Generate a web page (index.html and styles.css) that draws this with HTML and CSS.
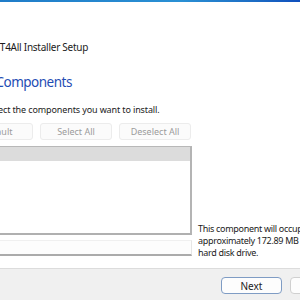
FILE: index.html
```html
<!DOCTYPE html>
<html>
<head>
<meta charset="utf-8">
<link rel="stylesheet" href="styles.css">
</head>
<body>
<div class="topbar"></div>
<div class="window">
  <header class="head">
    <div class="title">GPT4All Installer Setup</div>
    <h1 class="heading">Select Components</h1>
    <p class="sub">Select the components you want to install.</p>
  </header>
  <div class="main">
    <div class="left">
      <div class="btns">
        <button class="tbtn">Default</button>
        <button class="tbtn">Select All</button>
        <button class="tbtn">Deselect All</button>
      </div>
      <div class="list"><div class="list-head"></div></div>
      <div class="desc"></div>
    </div>
    <div class="size">This component will occupy<br>approximately 172.89 MB of<br>hard disk drive.</div>
  </div>
  <footer class="footer">
    <button class="btn primary">Next</button>
    <button class="btn">Cancel</button>
  </footer>
</div>
</body>
</html>
```
FILE: styles.css
```css
html, body {
  margin: 0;
  padding: 0;
  width: 300px;
  height: 300px;
  overflow: hidden;
  background: #ffffff;
  font-family: "Noto Sans", "Open Sans", sans-serif;
  color: #1b1b1b;
}
.topbar {
  height: 2px;
  background: linear-gradient(to right, #1f7cc8 0%, #2a90d4 60%, #1c6cc4 85%, #0f4fbd 100%);
}
.window {
  display: flex;
  flex-direction: column;
  height: 298px;
}
.head {
  padding-top: 38px;
}
.title {
  font-size: 10px;
  line-height: 14px;
  margin-left: -13px;
  white-space: nowrap;
  letter-spacing: -0.25px;
}
.heading {
  margin: 19px 0 0 -42px;
  font-size: 13.5px;
  line-height: 18px;
  font-weight: normal;
  color: #1f4db4;
  white-space: nowrap;
  letter-spacing: -0.5px;
}
.sub {
  margin: 12px 0 0 -14px;
  font-size: 9px;
  line-height: 13px;
  white-space: nowrap;
  letter-spacing: -0.12px;
}
.main {
  display: flex;
  align-items: flex-end;
  gap: 6px;
  margin-top: 7px;
  margin-left: -39px;
}
.left {
  width: 231px;
  flex: none;
  display: flex;
  flex-direction: column;
}
.btns {
  display: flex;
  gap: 7px;
}
.tbtn {
  width: 72px;
  height: 17px;
  padding: 0;
  font-family: inherit;
  font-size: 9px;
  color: #9c9c9c;
  background: #fbfbfb;
  border: 1px solid #ececec;
  border-radius: 3px;
}
.list {
  margin-top: 6px;
  height: 89px;
  box-sizing: border-box;
  border-top: 1px solid #b8b8b8;
  border-right: 2px solid #b4b4b4;
  border-bottom: 2px solid #b0b0b0;
  background: #ffffff;
}
.list-head {
  height: 14px;
  background: #dcdcdc;
}
.desc {
  margin-top: 5px;
  height: 16px;
  box-sizing: border-box;
  border-top: 1px solid #f0f0f0;
  border-right: 1px solid #e6e6e6;
  border-bottom: 2px solid #ababab;
  background: #fdfdfd;
}
.size {
  font-size: 9px;
  line-height: 12px;
  white-space: nowrap;
  margin-bottom: -3px;
  letter-spacing: -0.3px;
}
.footer {
  margin-top: 12px;
  flex: 1;
  border-top: 1px solid #dcdcdc;
  background: #f0f0f0;
  display: flex;
  gap: 8px;
  padding: 8px 0 0 221px;
  align-items: flex-start;
}
.btn {
  flex: none;
  width: 61px;
  height: 17px;
  padding: 0;
  font-family: inherit;
  font-size: 10px;
  color: #1b1b1b;
  background: #fdfdfd;
  border: 1px solid #d0d0d0;
  border-radius: 4px;
}
.btn.primary {
  border-color: #7f9cc4;
}
```
